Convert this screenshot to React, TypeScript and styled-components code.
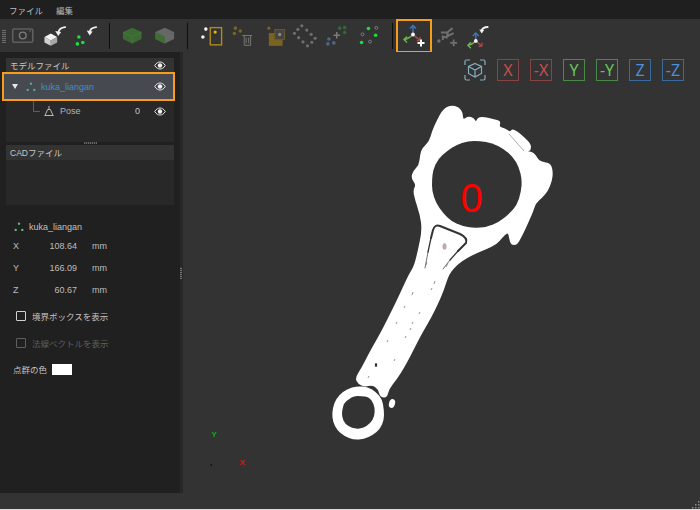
import React from 'react';
import styled, { createGlobalStyle } from 'styled-components';

const GlobalStyle = createGlobalStyle`
  html, body {
    margin: 0;
    padding: 0;
    background: #333;
  }
  * {
    box-sizing: border-box;
  }
`;

const Page = styled.div`
  width: 700px;
  height: 510px;
  display: flex;
  flex-direction: column;
  overflow: hidden;
  background: #333333;
  color: #c4c4c4;
  font-family: "Liberation Sans", "Noto Sans CJK JP", sans-serif;
  font-size: 9px;
`;

const MenuBar = styled.div`
  height: 19px;
  flex: none;
  display: flex;
  align-items: center;
  gap: 13px;
  padding: 0 0 0 9px;
  background: #1f1f1f;
  font-size: 8.5px;
  color: #bdbdbd;
`;

const Toolbar = styled.div`
  height: 33px;
  flex: none;
  display: flex;
  align-items: center;
  padding-left: 2px;
  background: #333333;
`;

const Grip = styled.div`
  width: 4px;
  height: 14px;
  margin-right: 1px;
  background: repeating-linear-gradient(0deg, #6a6a6a 0 1px, #3a3a3a 1px 2px);
`;

const ToolButton = styled.div<{ $active?: boolean }>`
  width: ${p => (p.$active ? 36 : 31.5)}px;
  height: ${p => (p.$active ? 34 : 33)}px;
  flex: none;
  border: ${p => (p.$active ? '2px solid #f89c1c' : 'none')};
  display: flex;
  align-items: center;
  justify-content: center;
  margin: ${p => (p.$active ? '0 -0.5px 0 -4px' : '0')};
`;

const Separator = styled.div`
  width: 1px;
  height: 26px;
  flex: none;
  margin: 0 7.5px 0 7px;
  background: #0d0d0d;
`;

const Main = styled.div`
  height: 441px;
  flex: none;
  display: flex;
`;

const Sidebar = styled.div`
  width: 180px;
  flex: none;
  display: flex;
  flex-direction: column;
  padding-top: 6px;
  background: #202020;
`;

const Box = styled.div<{ $h: number }>`
  height: ${p => p.$h}px;
  flex: none;
  margin: 0 6px;
  background: #282828;
`;

const BoxHeader = styled.div`
  height: 15px;
  display: flex;
  align-items: center;
  padding: 0 2px 1px 4px;
  background: #333333;
  font-size: 8.5px;
  color: #c8c8c8;
`;

const TreeRow = styled.div<{ $selected?: boolean }>`
  display: flex;
  align-items: center;
  position: relative;
  height: ${p => (p.$selected ? 29 : 20)}px;
  margin: ${p => (p.$selected ? '-1px -1px 0 -4px' : '0')};
  border: ${p => (p.$selected ? '2px solid #f89c1c' : 'none')};
  background: ${p => (p.$selected ? '#474950' : 'transparent')};
`;

const Caret = styled.span`
  width: 0;
  height: 0;
  margin: 0 8px 0 8px;
  border-left: 3.5px solid transparent;
  border-right: 3.5px solid transparent;
  border-top: 5px solid #e8e8e8;
`;

const ModelName = styled.span`
  margin-left: 5px;
  color: #3d8fcb;
`;

const PoseName = styled.span`
  margin-left: 5px;
  flex: 1;
  color: #b4b4b4;
`;

const PoseValue = styled.span`
  margin-right: 14px;
  color: #c4c4c4;
`;

const EyeSlot = styled.span<{ $right: number }>`
  display: flex;
  margin-left: auto;
  margin-right: ${p => p.$right}px;
`;

const Splitter = styled.div`
  height: 3px;
  flex: none;
  display: flex;
  justify-content: center;
  &::after {
    content: '';
    width: 13px;
    height: 2px;
    background: repeating-linear-gradient(90deg, #666 0 1px, #333 1px 2px);
  }
`;

const Info = styled.div`
  display: flex;
  flex-direction: column;
  padding: 14px 0 0 13px;
`;

const InfoTitle = styled.div`
  display: flex;
  align-items: center;
  gap: 5px;
  height: 16px;
  padding-left: 1px;
  color: #c0c0c0;
`;

const CoordRow = styled.div`
  display: grid;
  grid-template-columns: 20px 44px 30px;
  align-items: center;
  height: 22px;
  color: #bdbdbd;
`;

const CoordValue = styled.span`
  text-align: right;
`;

const CoordUnit = styled.span`
  padding-left: 15px;
`;

const CheckGroup = styled.div`
  display: flex;
  flex-direction: column;
  margin-top: 1px;
`;

const CheckRow = styled.label<{ $disabled?: boolean }>`
  display: flex;
  align-items: center;
  gap: 6px;
  height: 27px;
  padding-left: 3px;
  font-size: 8.5px;
  color: ${p => (p.$disabled ? '#5f5f5f' : '#c4c4c4')};
`;

const CheckBox = styled.span<{ $disabled?: boolean }>`
  width: 10px;
  height: 10px;
  flex: none;
  border: 1.5px solid ${p => (p.$disabled ? '#5f5f5f' : '#d0d0d0')};
  border-radius: 1px;
`;

const ColorRow = styled.div`
  display: flex;
  align-items: center;
  gap: 5px;
  height: 26px;
  font-size: 8.5px;
  color: #c4c4c4;
`;

const Swatch = styled.span`
  width: 20px;
  height: 11px;
  background: #ffffff;
`;

const SideHandle = styled.div`
  width: 3px;
  flex: none;
  display: flex;
  align-items: center;
  background: #272727;
  &::after {
    content: '';
    width: 2px;
    height: 12px;
    background: repeating-linear-gradient(0deg, #777 0 1px, #333 1px 2px);
  }
`;

const Viewport = styled.div`
  flex: 1;
  position: relative;
  background: #333333;
`;

const Scene = styled.svg`
  position: absolute;
  left: 0;
  top: 0;
`;

const ViewButtons = styled.div`
  position: absolute;
  left: 281px;
  top: 7px;
  display: flex;
  gap: 11px;
`;

const AxisButton = styled.div<{ $border: string; $color: string }>`
  width: 22px;
  height: 22px;
  display: flex;
  align-items: center;
  justify-content: center;
  border: 1px solid ${p => p.$border};
  color: ${p => p.$color};
  font-family: "Noto Sans", sans-serif;
  font-size: 16px;
  line-height: 1;
`;

const StatusBar = styled.div`
  flex: 1;
  display: flex;
  justify-content: flex-end;
  align-items: flex-end;
  background: #333333;
  border-bottom: 1px solid #dcdcdc;
`;

const Eye = () => (
  <svg width="12" height="9" viewBox="0 0 12 9">
    <path d="M0.7 4.5C2.4 1.9 4 1 6 1s3.6 0.9 5.3 3.5C9.6 7.1 8 8 6 8S2.4 7.1 0.7 4.5Z" fill="none" stroke="#e4e4e4" strokeWidth="1" />
    <circle cx="6" cy="4.5" r="2.2" fill="#f2f2f2" />
  </svg>
);

const PointsIcon = ({ color }: { color: string }) => (
  <svg width="10" height="10" viewBox="0 0 12 12">
    <circle cx="6" cy="2" r="1.4" fill={color} />
    <circle cx="2" cy="9.5" r="1.4" fill={color} />
    <circle cx="10" cy="9.5" r="1.4" fill={color} />
  </svg>
);

const PoseIcon = () => (
  <svg width="12" height="12" viewBox="0 0 12 12" fill="none" stroke="#b8b8b8" strokeWidth="1">
    <path d="M6 1v3M4.600 4.500h2.800L10 10.500H2Z" />
    <path d="M1.500 10.500h9" />
  </svg>
);

const SizeGrip = () => (
  <svg width="10" height="9" viewBox="0 0 10 9" fill="#8a8a8a">
    <rect x="8" y="1" width="1.500" height="1.500" />
    <rect x="5" y="4" width="1.500" height="1.500" />
    <rect x="8" y="4" width="1.500" height="1.500" />
    <rect x="2" y="7" width="1.500" height="1.500" />
    <rect x="5" y="7" width="1.500" height="1.500" />
    <rect x="8" y="7" width="1.500" height="1.500" />
  </svg>
);

// toolbar icons are drawn in page coordinates, the viewBox moves them into the button
const ToolIcon = ({ cx, children }: { cx: number; children: React.ReactNode }) => (
  <svg width="32" height="30" viewBox={`${cx - 16} 21 32 30`} fill="none">
    {children}
  </svg>
);

const Dots = ({ pts, fill, r = 1.8 }: { pts: number[][]; fill: string; r?: number }) => (
  <>
    {pts.map(([x, y]) => (
      <circle key={`${x}-${y}`} cx={x} cy={y} r={r} fill={fill} />
    ))}
  </>
);

const Rings = ({ pts, stroke }: { pts: number[][]; stroke: string }) => (
  <>
    {pts.map(([x, y]) => (
      <circle key={`${x}-${y}`} cx={x} cy={y} r={1.5} stroke={stroke} strokeWidth="1" />
    ))}
  </>
);

const CurveArrow = ({ d, head }: { d: string; head: string }) => (
  <>
    <path d={d} stroke="#f0f0f0" strokeWidth="2" strokeLinecap="round" />
    <path d={head} fill="#f0f0f0" />
  </>
);

const Axes = ({ x, y, len }: { x: number; y: number; len: number }) => (
  <>
    <path d={`M${x} ${y}V${y - len}`} stroke="#3f79c4" strokeWidth="1.4" />
    <path d={`M${x - 3} ${y - len + 3}L${x} ${y - len}L${x + 3} ${y - len + 3}`} stroke="#3f79c4" strokeWidth="1.4" />
    <path d={`M${x} ${y}L${x + len * 0.75} ${y + len * 0.65}`} stroke="#a84a4a" strokeWidth="1.4" />
    <path d={`M${x + len * 0.75 - 3} ${y + len * 0.65 + 0.5}L${x + len * 0.75} ${y + len * 0.65}L${x + len * 0.75 + 0.5} ${y + len * 0.65 - 3.5}`} stroke="#a84a4a" strokeWidth="1.4" />
    <path d={`M${x} ${y}Q${x - len * 0.5} ${y + len * 0.5} ${x - len} ${y + len * 0.55}`} stroke="#6fb552" strokeWidth="1.4" />
    <path d={`M${x - len + 3} ${y + len * 0.55 - 3}L${x - len} ${y + len * 0.55}L${x - len + 3} ${y + len * 0.55 + 3}`} stroke="#6fb552" strokeWidth="1.4" />
    <circle cx={x} cy={y} r="1.9" fill="#f4f4f4" />
  </>
);

// round off a traced polygon: each vertex becomes the control point of a curve between edge midpoints
const smooth = (pts: number[][]) => {
  const mid = (a: number[], b: number[]) => `${(a[0] + b[0]) / 2} ${(a[1] + b[1]) / 2}`;
  const last = pts[pts.length - 1];
  let d = `M${mid(last, pts[0])}`;
  pts.forEach((p, i) => {
    d += `Q${p[0]} ${p[1]} ${mid(p, pts[(i + 1) % pts.length])}`;
  });
  return `${d}Z`;
};

const partOutline = smooth([
  [411, 178], [413, 171], [419, 165], [420, 155], [422, 148], [429, 142], [432, 131], [437, 120], [443, 109], [451, 105], [459, 107], [463, 113],
  [463, 120], [468, 116], [474, 118], [476, 122], [478, 117], [485, 117], [493, 119], [501, 121], [499, 127], [505, 128], [510, 132], [512, 129],
  [517, 131], [524, 137], [531, 144], [531, 150], [527, 152], [531, 151], [536, 155], [539, 161], [545, 162], [551, 164], [553, 172], [552, 181], [548, 191], [542, 198], [536, 203],
  [533, 212], [529, 221], [525, 230], [521, 238], [517, 245], [511, 245], [509, 238], [508, 232], [502, 238], [497, 244], [487, 249], [477, 253],
  [467, 258], [458, 264], [449, 274], [444, 290], [438, 304], [431, 318], [424, 330], [418, 341], [411, 355], [404, 368], [397, 379], [389, 389],
  [387, 398], [380, 397], [378, 389], [372, 385], [365, 387], [358, 384], [355, 378], [362, 367], [369, 353], [377, 339], [383, 328], [389, 316],
  [396, 302], [402, 289], [409, 274], [414, 266], [418, 250], [422, 230], [420, 215], [415, 200], [413, 190], [416, 185],
]);
const partHole = smooth([
  [432, 180], [433, 170], [438, 159], [447, 151], [456, 145], [468, 141], [480, 141], [492, 143], [504, 149], [513, 157], [519, 167], [522, 180],
  [521, 192], [517, 205], [509, 214], [499, 222], [487, 227], [474, 228], [462, 226], [451, 221], [443, 213], [436, 203], [432, 191],
]);
const ringOutline = smooth([
  [332, 413], [334, 403], [339, 395], [347, 389], [357, 386], [368, 387], [376, 392], [382, 399], [384, 410], [384, 420], [380, 429], [373, 435],
  [364, 439], [354, 440], [344, 436], [337, 430], [333, 422],
]);
const ringHole = smooth([
  [342, 411], [344, 403], [349, 399], [354, 396], [361, 396], [369, 397], [374, 404], [375, 412], [373, 420], [367, 426], [360, 429], [352, 428],
  [345, 424], [342, 417],
]);

const slits = [
  'M427 262L426 265', 'M448 263L446 267', 'M435 281L434 284', 'M432 288L431 290', 'M413 292L412 295', 'M405 306L404 308',
  'M420 312L419 314', 'M397 322L396 324', 'M413 322L412 324', 'M411 328L410 330', 'M388 340L387 342', 'M406 336L405 338',
  'M395 359L394 361', 'M369 376L368 378',
];

const AXES = [
  { label: 'X', border: '#8a4343', color: '#c94f4c' },
  { label: '-X', border: '#8a4343', color: '#c94f4c' },
  { label: 'Y', border: '#4b8a46', color: '#69c35c' },
  { label: '-Y', border: '#4b8a46', color: '#69c35c' },
  { label: 'Z', border: '#3a6a9e', color: '#4b8fdd' },
  { label: '-Z', border: '#3a6a9e', color: '#4b8fdd' },
];

const App: React.FC = () => (
  <Page>
    <GlobalStyle />
    <MenuBar>
      <span>ファイル</span>
      <span>編集</span>
    </MenuBar>
    <Toolbar>
      <Grip />
      <ToolButton>
        <ToolIcon cx={23}>
          <rect x="12.800" y="28.800" width="20.400" height="13.600" rx="1.500" stroke="#5f5f5f" strokeWidth="1.600" />
          <circle cx="23" cy="35.500" r="3.400" stroke="#7d7d7d" strokeWidth="1.400" />
          <circle cx="30.500" cy="31" r="0.800" fill="#7d7d7d" />
        </ToolIcon>
      </ToolButton>
      <ToolButton>
        <ToolIcon cx={54.5}>
          <path d="M44 37L50.500 33.500L57 37L50.500 40.500Z" fill="#f2f2f2" />
          <path d="M44 37L50.500 40.500V46L44 42.500Z" fill="#d0d0d0" />
          <path d="M57 37L50.500 40.500V46L57 42.500Z" fill="#a8a8a8" />
          <CurveArrow d="M58 33C58.500 29.500 60.500 27.500 65 27" head="M55 31L61 32L58 36Z" />
        </ToolIcon>
      </ToolButton>
      <ToolButton>
        <ToolIcon cx={86}>
          <Dots pts={[[77.500, 44], [83, 42.500], [79, 37]]} fill="#1fe03a" />
          <CurveArrow d="M90 32C90.500 29 92.500 27.500 96.500 27" head="M87 30.500L93 31.500L90 35.500Z" />
        </ToolIcon>
      </ToolButton>
      <Separator />
      <ToolButton>
        <ToolIcon cx={133}>
          <path d="M132.500 27.500L142 32V39L132.500 43.500L123 39V32Z" fill="#3c6a32" />
          <path d="M123 32L132.500 36.500L142 32M132.500 36.500V43.500" stroke="#4d7f42" strokeWidth="0.600" />
        </ToolIcon>
      </ToolButton>
      <ToolButton>
        <ToolIcon cx={164}>
          <path d="M164 27.500L173.500 32V39L164 43.500L154.500 39V32Z" fill="#676767" />
          <path d="M154.500 32L164 36.500V43.500L154.500 39Z" fill="#3f6d35" />
        </ToolIcon>
      </ToolButton>
      <Separator />
      <ToolButton>
        <ToolIcon cx={211}>
          <Dots pts={[[205, 29], [202, 37]]} fill="#f2f2f2" />
          <rect x="209.500" y="27.500" width="11.500" height="17.500" stroke="#b08a1e" strokeWidth="1.400" />
          <circle cx="214.500" cy="32" r="1.600" fill="#e6b420" />
        </ToolIcon>
      </ToolButton>
      <ToolButton>
        <ToolIcon cx={242.5}>
          <Dots pts={[[235, 28], [240, 31], [234, 33.500]]} fill="#7a6320" />
          <path d="M242 35.500H252M244 35.500V45.500H250.500V35.500M246 37.500V43.500M248.500 37.500V43.500" stroke="#777" strokeWidth="1" />
        </ToolIcon>
      </ToolButton>
      <ToolButton>
        <ToolIcon cx={274}>
          <circle cx="268" cy="28" r="1.600" fill="#7a6320" />
          <rect x="268" y="33" width="14" height="13" fill="#7a6320" />
          <rect x="274" y="29.500" width="10" height="10" fill="#444" stroke="#6a5a2a" strokeWidth="1" />
          <circle cx="279" cy="34.500" r="1.700" fill="#888" />
        </ToolIcon>
      </ToolButton>
      <ToolButton>
        <ToolIcon cx={305.5}>
          <Dots
            r={1.600}
            fill="#6f6f6f"
            pts={[[301.500, 25.700], [297.500, 29.300], [306.500, 30], [294, 33.300], [311, 34.300], [298.300, 37.700], [315, 38.300], [302.700, 42], [311.700, 42.300], [307.300, 46]]}
          />
        </ToolIcon>
      </ToolButton>
      <ToolButton>
        <ToolIcon cx={337}>
          <Dots pts={[[328, 39], [327, 44], [333, 43]]} fill="#4f6688" />
          <Dots pts={[[339, 28], [344, 27.500], [344, 32.500]]} fill="#2f6a3a" />
          <path d="M336 32V38.500M332.700 35.200H339.300" stroke="#7a7a7a" strokeWidth="1.600" />
        </ToolIcon>
      </ToolButton>
      <ToolButton>
        <ToolIcon cx={368}>
          <Dots pts={[[367.700, 28.300], [375, 35.300], [360.700, 42.700]]} fill="#1fe03a" />
          <Rings pts={[[375.700, 27.700], [361.700, 34.300], [369.300, 41.700]]} stroke="#7a7a7a" />
        </ToolIcon>
      </ToolButton>
      <Separator />
      <ToolButton $active>
        <ToolIcon cx={414}>
          <Axes x={413} y={34.500} len={9} />
          <path d="M421 39.500V46.500M417.500 43H424.500" stroke="#ffffff" strokeWidth="2" />
        </ToolIcon>
      </ToolButton>
      <ToolButton>
        <ToolIcon cx={447}>
          <circle cx="438" cy="41" r="1.800" fill="#6f6f6f" />
          <path d="M440 32.500H447L446 37.500L442 36.500V40M447 32L452 28M447 36L453 33" stroke="#6f6f6f" strokeWidth="2" />
          <path d="M453 39.500V46.500M449.500 43H456.500" stroke="#6f6f6f" strokeWidth="1.800" />
        </ToolIcon>
      </ToolButton>
      <ToolButton>
        <ToolIcon cx={478}>
          <Axes x={475} y={41} len={8} />
          <CurveArrow d="M481 30C482 28 484 27 487 26.800" head="M478.500 29.500L483.500 30L481 33.500Z" />
        </ToolIcon>
      </ToolButton>
    </Toolbar>
    <Main>
      <Sidebar>
        <Box $h={84}>
          <BoxHeader>
            モデルファイル
            <EyeSlot $right={6}>
              <Eye />
            </EyeSlot>
          </BoxHeader>
          <TreeRow $selected>
            <Caret />
            <PointsIcon color="#4fae98" />
            <ModelName>kuka_liangan</ModelName>
            <EyeSlot $right={7}>
              <Eye />
            </EyeSlot>
          </TreeRow>
          <TreeRow>
            <svg width="37" height="20" viewBox="0 0 37 20" fill="none">
              <path d="M27.500 0V10.500H34" stroke="#5c5c5c" strokeWidth="1" />
            </svg>
            <PoseIcon />
            <PoseName>Pose</PoseName>
            <PoseValue>0</PoseValue>
            <EyeSlot $right={8}>
              <Eye />
            </EyeSlot>
          </TreeRow>
        </Box>
        <Splitter />
        <Box $h={60}>
          <BoxHeader>CADファイル</BoxHeader>
        </Box>
        <Info>
          <InfoTitle>
            <PointsIcon color="#5fbd8a" />
            kuka_liangan
          </InfoTitle>
          <CoordRow>
            <span>X</span>
            <CoordValue>108.64</CoordValue>
            <CoordUnit>mm</CoordUnit>
          </CoordRow>
          <CoordRow>
            <span>Y</span>
            <CoordValue>166.09</CoordValue>
            <CoordUnit>mm</CoordUnit>
          </CoordRow>
          <CoordRow>
            <span>Z</span>
            <CoordValue>60.67</CoordValue>
            <CoordUnit>mm</CoordUnit>
          </CoordRow>
          <CheckGroup>
            <CheckRow>
              <CheckBox />
              境界ボックスを表示
            </CheckRow>
            <CheckRow $disabled>
              <CheckBox $disabled />
              法線ベクトルを表示
            </CheckRow>
          </CheckGroup>
          <ColorRow>
            点群の色
            <Swatch />
          </ColorRow>
        </Info>
      </Sidebar>
      <SideHandle />
      <Viewport>
        <Scene width="517" height="441" viewBox="183 52 517 441">
          <path d={partOutline} fill="#ffffff" />
          <path d={partHole} fill="#333333" />
          <path d={ringOutline} fill="#ffffff" />
          <path d={ringHole} fill="#333333" />
          <ellipse cx="392" cy="403.500" rx="3" ry="4.500" fill="#ffffff" transform="rotate(15 392 403.500)" />
          <path d="M509 134L524 151" fill="none" stroke="#8a8a8a" strokeWidth="0.700" />
          <g fill="none" stroke="#333333" strokeLinecap="round" strokeLinejoin="round">
            <path strokeWidth="2" d="M431 238L433 230Q435 224 440 226L460 234Q468 238 466 243L458 251" />
            <path strokeWidth="1.300" d="M431 238L428 252M458 251L450 260" />
            <path strokeWidth="0.700" d="M428 252L425 268M450 260L443 269" />
          </g>
          <ellipse cx="444.500" cy="246.500" rx="2" ry="3.200" fill="#bca9a9" />
          {slits.map(d => (
            <path key={d} d={d} stroke="#777777" strokeWidth="0.800" />
          ))}
          <ellipse cx="376" cy="365" rx="1.200" ry="2" fill="#333333" />
          <text x="460.500" y="212" fill="#ff0000" fontFamily="Liberation Sans, sans-serif" fontSize="40">0</text>
          <text x="211.500" y="437" fill="#1aa31a" fontFamily="Liberation Sans, sans-serif" fontWeight="700" fontSize="8">Y</text>
          <text x="239.500" y="465" fill="#d01818" fontFamily="Liberation Sans, sans-serif" fontWeight="700" fontSize="8">X</text>
          <rect x="210.500" y="464" width="1.500" height="2" fill="#111111" />
        </Scene>
        <ViewButtons>
          <svg width="22" height="22" viewBox="0 0 22 22" fill="none" stroke="#84aebf" strokeWidth="1.200">
            <path d="M1 6V2.500Q1 1 2.500 1H6M16 1H19.500Q21 1 21 2.500V6M21 16V19.500Q21 21 19.500 21H16M6 21H2.500Q1 21 1 19.500V16" />
            <path d="M11 4.500L17.500 7.500V14.500L11 18L4.500 14.500V7.500ZM4.500 7.500L11 11L17.500 7.500M11 11V18" />
          </svg>
          {AXES.map(a => (
            <AxisButton key={a.label} $border={a.border} $color={a.color}>
              {a.label}
            </AxisButton>
          ))}
        </ViewButtons>
      </Viewport>
    </Main>
    <StatusBar>
      <SizeGrip />
    </StatusBar>
  </Page>
);

export default App;
